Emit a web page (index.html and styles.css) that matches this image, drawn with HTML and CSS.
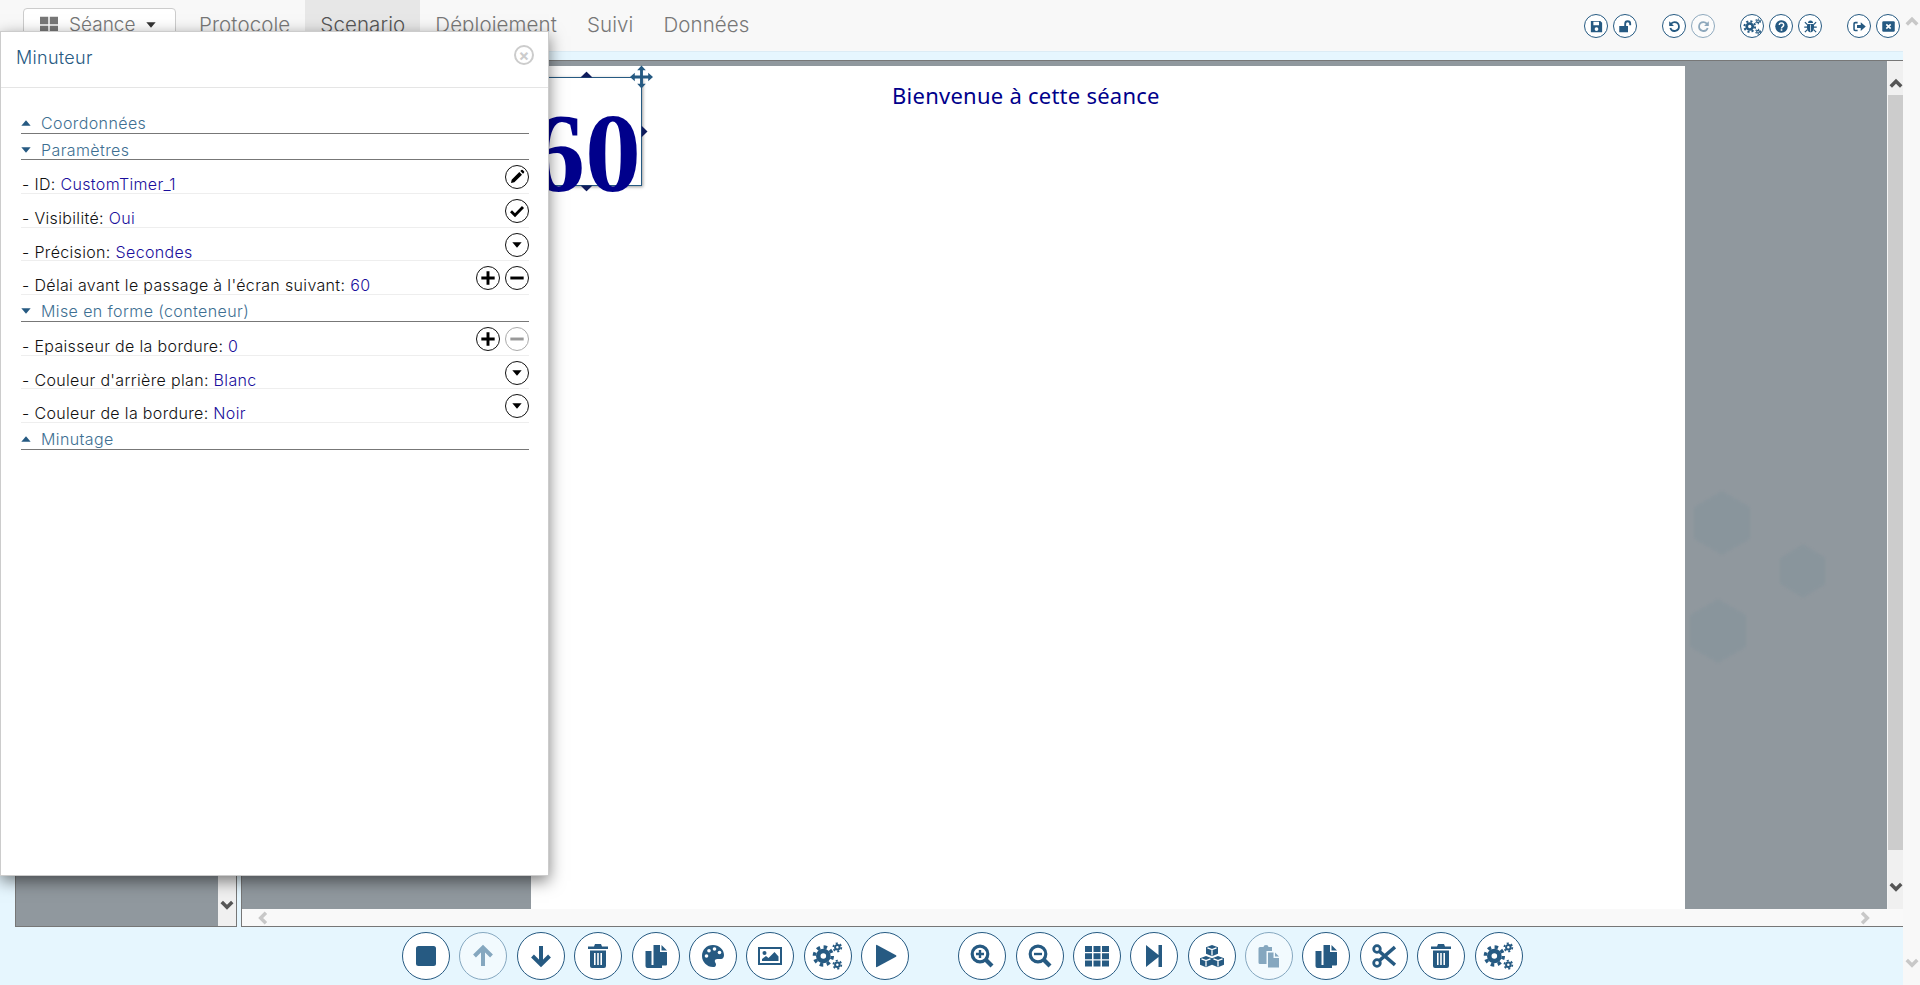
FILE: index.html
```html
<!DOCTYPE html>
<html lang="fr">
<head>
    <meta charset="UTF-8">
    <title>Minuteur</title>
    <link rel="stylesheet" href="styles.css">
</head>
<body>
    <svg class="sprite" xmlns="http://www.w3.org/2000/svg">
        <symbol id="i-save" viewBox="0 0 24 24"><path fill-rule="evenodd" d="M3 3h15l3 3v15H3zM7 4.500v5.500h9V4.500zM12 13a3 3 0 1 0 0 6 3 3 0 0 0 0-6z"/></symbol>
        <symbol id="i-unlock" viewBox="0 0 24 24"><path d="M2 11h14v10H2zM10 11V7.500a5.500 5.500 0 0 1 11 0V10h-3V7.500a2.500 2.500 0 0 0-5 0V11z"/></symbol>
        <symbol id="i-undo" viewBox="0 0 24 24"><path d="M12 3.500a8.500 8.500 0 1 1-8 11.300l2.600-.9A5.700 5.700 0 1 0 12 6.300a5.600 5.600 0 0 0-3.900 1.600L11 11H3.500V3.500l2.600 2.500A8.400 8.400 0 0 1 12 3.500z"/></symbol>
        <symbol id="i-redo" viewBox="0 0 24 24"><path transform="matrix(-1 0 0 1 24 0)" d="M12 3.500a8.500 8.500 0 1 1-8 11.300l2.600-.9A5.700 5.700 0 1 0 12 6.300a5.600 5.600 0 0 0-3.900 1.600L11 11H3.500V3.500l2.600 2.500A8.400 8.400 0 0 1 12 3.500z"/></symbol>
        <symbol id="i-cogs" viewBox="0 0 24 24">
            <g fill="none" stroke="currentColor">
                <circle cx="8.500" cy="12" r="3.800" stroke-width="3.400"/>
                <circle cx="8.500" cy="12" r="6.700" stroke-width="2.600" stroke-dasharray="2.630 2.630"/>
                <circle cx="19" cy="5.500" r="1.700" stroke-width="1.500"/>
                <circle cx="19" cy="5.500" r="3" stroke-width="1.300" stroke-dasharray="1.570 1.570"/>
                <circle cx="19" cy="18.500" r="1.700" stroke-width="1.500"/>
                <circle cx="19" cy="18.500" r="3" stroke-width="1.300" stroke-dasharray="1.570 1.570"/>
            </g>
        </symbol>
        <symbol id="i-help" viewBox="0 0 24 24">
            <circle cx="12" cy="12" r="10"/>
            <path d="M8.500 9.500a3.500 3.200 0 1 1 5.500 2.600c-1.300.9-2 1.400-2 2.900" fill="none" stroke="#fff" stroke-width="2.400"/>
            <rect x="10.700" y="16.300" width="2.600" height="2.600" fill="#fff"/>
        </symbol>
        <symbol id="i-bug" viewBox="0 0 24 24">
            <path d="M8 6.500a4 4 0 0 1 8 0z"/>
            <path d="M7 8h10c1 2 1 9-1 11-1 1.500-3 2-4 2s-3-.5-4-2C6 17 6 10 7 8z"/>
            <path d="M3 5l4 4M21 5l-4 4M2 13h5M22 13h-5M3 21l4-4M21 21l-4-4" stroke="currentColor" stroke-width="2" fill="none"/>
            <path d="M12 9v11" stroke="#fff" stroke-width="1.200"/>
        </symbol>
        <symbol id="i-exit" viewBox="0 0 24 24"><path d="M9 4.500v2.500H5.500q-1 0-1 1v8q0 1 1 1H9v2.500H5a3 3 0 0 1-3-3V7.500a3 3 0 0 1 3-3z"/><path d="M8 9.500h6V5l8 7-8 7v-4.500H8z"/></symbol>
        <symbol id="i-close-box" viewBox="0 0 24 24"><rect x="2" y="3.500" width="20" height="17" rx="2"/><path d="M8.500 8.500l7 7M15.500 8.500l-7 7" stroke="#fff" stroke-width="2.600"/></symbol>
        <symbol id="i-stop" viewBox="0 0 24 24"><rect x="2" y="2" width="20" height="20" rx="2.500"/></symbol>
        <symbol id="i-up" viewBox="0 0 24 24"><path d="M12 22V4M3.500 12L12 3.500 20.500 12" fill="none" stroke="currentColor" stroke-width="4"/></symbol>
        <symbol id="i-down" viewBox="0 0 24 24"><path d="M12 2v18M3.500 12l8.500 8.500 8.500-8.500" fill="none" stroke="currentColor" stroke-width="4"/></symbol>
        <symbol id="i-trash" viewBox="0 0 24 24"><path fill-rule="evenodd" d="M9 0h6l1 2.500h6V5H2V2.500h6zM4 6.500h16V22a2 2 0 0 1-2 2H6a2 2 0 0 1-2-2zM8 9v12h1.600V9zM11.200 9v12h1.600V9zM14.400 9v12H16V9z"/></symbol>
        <symbol id="i-copy" viewBox="0 0 24 24"><path d="M1.500 7H7.500v14h10.500v3H3.500a2 2 0 0 1-2-2z"/><path d="M9.500 1H16v7h7v12.500a1 1 0 0 1-1 1H9.500zM17.500 1l5.500 5.500h-5.500z"/></symbol>
        <symbol id="i-palette" viewBox="0 0 24 24">
            <path d="M12 1C5.500 1 1 5.800 1 12c0 6 5 11 11 11 2 0 3-1 3-2.600 0-1.800-1.200-2-1.200-3.500 0-1.300 1-2 2.400-2H20c2 0 3-1.500 3-3.900C23 5.500 18 1 12 1z"/>
            <circle cx="5.500" cy="12" r="1.800" fill="#fff"/><circle cx="8" cy="6.800" r="1.800" fill="#fff"/><circle cx="13.500" cy="5" r="1.800" fill="#fff"/><circle cx="18.500" cy="8.500" r="1.800" fill="#fff"/>
        </symbol>
        <symbol id="i-image" viewBox="0 0 24 24"><path fill-rule="evenodd" d="M0 3h24v18H0zM2 5v14h20V5z"/><circle cx="6.500" cy="9" r="2"/><path d="M4 17v-2l4-3 2.500 2 6-6 4 4.500V17z"/></symbol>
        <symbol id="i-play" viewBox="0 0 24 24"><path d="M3 1.500q0-1 1-.5l19 10.300q1 .7 0 1.400L4 23q-1 .5-1-.5z"/></symbol>
        <symbol id="i-zoom-in" viewBox="0 0 24 24"><circle cx="10" cy="10" r="7.800" fill="none" stroke="currentColor" stroke-width="3.200"/><path d="M15.500 15.500L22 22" stroke="currentColor" stroke-width="4.200"/><path d="M6 10h8M10 6v8" stroke="currentColor" stroke-width="2.400"/></symbol>
        <symbol id="i-zoom-out" viewBox="0 0 24 24"><circle cx="10" cy="10" r="7.800" fill="none" stroke="currentColor" stroke-width="3.200"/><path d="M15.500 15.500L22 22" stroke="currentColor" stroke-width="4.200"/><path d="M6 10h8" stroke="currentColor" stroke-width="2.400"/></symbol>
        <symbol id="i-grid" viewBox="0 0 24 24"><path d="M0 2h7v6H0zM8.500 2h7v6h-7zM17 2h7v6h-7zM0 9.200h7v6H0zM8.500 9.200h7v6h-7zM17 9.200h7v6h-7zM0 16.400h7v6H0zM8.500 16.400h7v6h-7zM17 16.400h7v6h-7z"/></symbol>
        <symbol id="i-step" viewBox="0 0 24 24"><path d="M4 1l12.500 10V1H20v22h-3.500V13L4 23z"/></symbol>
        <symbol id="i-cubes" viewBox="0 0 24 24">
            <path d="M12 1l6 2.300v6.500l-6 2.500-6-2.500V3.300z"/><path d="M6 12l6 2.300v6.500L6 23.300 0 20.800v-6.500z"/><path d="M18 12l6 2.300v6.500l-6 2.500-6-2.500v-6.500z"/>
            <path d="M7.500 3.800L12 5.500l4.500-1.700M12 5.500v6M1.500 14.800L6 16.500l4.500-1.700M6 16.500v6M13.500 14.800L18 16.500l4.500-1.700M18 16.500v6" fill="none" stroke="#fff" stroke-width="1.300"/>
        </symbol>
        <symbol id="i-paste" viewBox="0 0 24 24"><path d="M3 3h3.500a2.500 2 0 0 1 5 0H15v4H9.500v13H3a1.500 1.500 0 0 1-1.500-1.500v-14A1.500 1.500 0 0 1 3 3z"/><path d="M11 8.500h5.500v5.500H22v9.500H11zM18 8.500l4 4h-4z"/></symbol>
        <symbol id="i-cut" viewBox="0 0 24 24">
            <circle cx="5" cy="5" r="3.300" fill="none" stroke="currentColor" stroke-width="2.800"/><circle cx="5" cy="19" r="3.300" fill="none" stroke="currentColor" stroke-width="2.800"/>
            <path d="M7.500 7.500L23 21M7.500 16.500L23 3" stroke="currentColor" stroke-width="3.600"/>
        </symbol>
        <symbol id="i-pencil" viewBox="0 0 24 24"><path d="M15.500 4.500l4 4L8 20l-5 1 1-5zM17 3l1.500-1.500a1.500 1.500 0 0 1 2 0l2 2a1.500 1.500 0 0 1 0 2L21 7z"/></symbol>
        <symbol id="i-check" viewBox="0 0 24 24"><path d="M3 12.500l6 6L21 6" fill="none" stroke="currentColor" stroke-width="4.200"/></symbol>
        <symbol id="i-caret" viewBox="0 0 24 24"><path d="M5 8h14l-7 8z"/></symbol>
        <symbol id="i-caret-up" viewBox="0 0 24 24"><path d="M5 16h14l-7-8z"/></symbol>
        <symbol id="i-plus" viewBox="0 0 24 24"><path d="M2 12h20M12 2v20" stroke="currentColor" stroke-width="4.400"/></symbol>
        <symbol id="i-minus" viewBox="0 0 24 24"><path d="M2 12h20" stroke="currentColor" stroke-width="4.400"/></symbol>
        <symbol id="i-tiles" viewBox="0 0 24 24"><path d="M0 1h11v10H0zM13 1h11v10H13zM0 13h11v10H0zM13 13h11v10H13z"/></symbol>
        <symbol id="i-move" viewBox="0 0 24 24"><path d="M12 0l4.500 5H13.500v5.500H19V7.500l5 4.500-5 4.500v-3h-5.500V19h3L12 24l-4.500-5h3v-5.500H5v3L0 12l5-4.500v3h5.500V5h-3z"/></symbol>
        <symbol id="i-chev-up" viewBox="0 0 24 24"><path d="M3 18l9-9 9 9" fill="none" stroke="currentColor" stroke-width="6"/></symbol>
        <symbol id="i-chev-down" viewBox="0 0 24 24"><path d="M3 7l9 9 9-9" fill="none" stroke="currentColor" stroke-width="6"/></symbol>
        <symbol id="i-chev-left" viewBox="0 0 24 24"><path d="M17 3l-9 9 9 9" fill="none" stroke="currentColor" stroke-width="6"/></symbol>
        <symbol id="i-chev-right" viewBox="0 0 24 24"><path d="M7 3l9 9-9 9" fill="none" stroke="currentColor" stroke-width="6"/></symbol>
    </svg>

    <div class="page">
        <div class="app">
            <nav class="navbar">
                <button class="seance-btn">
                    <svg class="seance-icon"><use href="#i-tiles"/></svg>
                    <span>Séance</span>
                    <svg class="seance-caret"><use href="#i-caret"/></svg>
                </button>
                <a class="nav-link">Protocole</a>
                <a class="nav-link active">Scenario</a>
                <a class="nav-link">Déploiement</a>
                <a class="nav-link">Suivi</a>
                <a class="nav-link">Données</a>

                <div class="nav-tools">
                    <div class="nav-group">
                        <span class="round-btn small"><svg><use href="#i-save"/></svg></span>
                        <span class="round-btn small"><svg><use href="#i-unlock"/></svg></span>
                    </div>
                    <div class="nav-group">
                        <span class="round-btn small"><svg><use href="#i-undo"/></svg></span>
                        <span class="round-btn small disabled"><svg><use href="#i-redo"/></svg></span>
                    </div>
                    <div class="nav-group">
                        <span class="round-btn small"><svg class="wide"><use href="#i-cogs"/></svg></span>
                        <span class="round-btn small"><svg><use href="#i-help"/></svg></span>
                        <span class="round-btn small"><svg><use href="#i-bug"/></svg></span>
                    </div>
                    <div class="nav-group">
                        <span class="round-btn small"><svg><use href="#i-exit"/></svg></span>
                        <span class="round-btn small"><svg><use href="#i-close-box"/></svg></span>
                    </div>
                </div>
            </nav>

            <div class="workspace">
                <aside class="side-list">
                    <div class="side-fill"></div>
                    <div class="side-scroll"><svg class="chev dark"><use href="#i-chev-down"/></svg></div>
                </aside>

                <section class="stage">
                    <div class="stage-main">
                        <div class="viewport">
                            <div class="sheet">
                                <p class="sheet-title">Bienvenue à cette séance</p>
                                <div class="timer">
                                    <span class="timer-value">60</span>
                                    <i class="handle handle-top"></i>
                                    <i class="handle handle-right"></i>
                                    <i class="handle handle-bottom"></i>
                                    <svg class="move-icon"><use href="#i-move"/></svg>
                                </div>
                            </div>
                            <svg class="hexagons" viewBox="0 0 140 200">
                                <polygon points="37,13 65,29 65,61 37,77 9,61 9,29"/>
                                <polygon points="118,66 141,80 141,106 118,120 95,106 95,80"/>
                                <polygon points="33,121 61,137 61,169 33,185 5,169 5,137"/>
                            </svg>
                        </div>
                        <div class="v-scroll">
                            <div class="v-scroll-top"><svg class="chev dark"><use href="#i-chev-up"/></svg></div>
                            <div class="v-scroll-thumb"></div>
                            <div class="v-scroll-bottom"><svg class="chev dark"><use href="#i-chev-down"/></svg></div>
                        </div>
                    </div>
                    <div class="h-scroll">
                        <svg class="chev light"><use href="#i-chev-left"/></svg>
                        <svg class="chev light"><use href="#i-chev-right"/></svg>
                    </div>
                </section>
            </div>

            <footer class="toolbar">
                <div class="tool-group">
                    <span class="round-btn big"><svg><use href="#i-stop"/></svg></span>
                    <span class="round-btn big disabled"><svg><use href="#i-up"/></svg></span>
                    <span class="round-btn big"><svg><use href="#i-down"/></svg></span>
                    <span class="round-btn big"><svg><use href="#i-trash"/></svg></span>
                    <span class="round-btn big"><svg><use href="#i-copy"/></svg></span>
                    <span class="round-btn big"><svg><use href="#i-palette"/></svg></span>
                    <span class="round-btn big"><svg><use href="#i-image"/></svg></span>
                    <span class="round-btn big"><svg class="wide"><use href="#i-cogs"/></svg></span>
                    <span class="round-btn big"><svg><use href="#i-play"/></svg></span>
                </div>
                <div class="tool-group">
                    <span class="round-btn big"><svg><use href="#i-zoom-in"/></svg></span>
                    <span class="round-btn big"><svg><use href="#i-zoom-out"/></svg></span>
                    <span class="round-btn big"><svg><use href="#i-grid"/></svg></span>
                    <span class="round-btn big"><svg><use href="#i-step"/></svg></span>
                    <span class="round-btn big"><svg><use href="#i-cubes"/></svg></span>
                    <span class="round-btn big disabled"><svg><use href="#i-paste"/></svg></span>
                    <span class="round-btn big"><svg><use href="#i-copy"/></svg></span>
                    <span class="round-btn big"><svg><use href="#i-cut"/></svg></span>
                    <span class="round-btn big"><svg><use href="#i-trash"/></svg></span>
                    <span class="round-btn big"><svg class="wide"><use href="#i-cogs"/></svg></span>
                </div>
            </footer>
        </div>

        <div class="page-scroll">
            <svg class="chev light"><use href="#i-chev-up"/></svg>
            <svg class="chev light"><use href="#i-chev-down"/></svg>
        </div>
    </div>

    <div class="dialog">
        <header class="dialog-head">
            <span class="dialog-title">Minuteur</span>
            <span class="dialog-close">&times;</span>
        </header>
        <div class="dialog-body">
            <div class="section-head"><svg class="section-caret"><use href="#i-caret-up"/></svg>Coordonnées</div>

            <div class="section-head"><svg class="section-caret"><use href="#i-caret"/></svg>Paramètres</div>
            <div class="prop-row">
                <span class="prop-text">- ID: <b>CustomTimer_1</b></span>
                <span class="prop-actions"><span class="round-btn row"><svg><use href="#i-pencil"/></svg></span></span>
            </div>
            <div class="prop-row">
                <span class="prop-text">- Visibilité: <b>Oui</b></span>
                <span class="prop-actions"><span class="round-btn row"><svg><use href="#i-check"/></svg></span></span>
            </div>
            <div class="prop-row">
                <span class="prop-text">- Précision: <b>Secondes</b></span>
                <span class="prop-actions"><span class="round-btn row"><svg><use href="#i-caret"/></svg></span></span>
            </div>
            <div class="prop-row">
                <span class="prop-text">- Délai avant le passage à l'écran suivant: <b>60</b></span>
                <span class="prop-actions">
                    <span class="round-btn row"><svg><use href="#i-plus"/></svg></span>
                    <span class="round-btn row"><svg><use href="#i-minus"/></svg></span>
                </span>
            </div>

            <div class="section-head"><svg class="section-caret"><use href="#i-caret"/></svg>Mise en forme (conteneur)</div>
            <div class="prop-row">
                <span class="prop-text">- Epaisseur de la bordure: <b>0</b></span>
                <span class="prop-actions">
                    <span class="round-btn row"><svg><use href="#i-plus"/></svg></span>
                    <span class="round-btn row off"><svg><use href="#i-minus"/></svg></span>
                </span>
            </div>
            <div class="prop-row">
                <span class="prop-text">- Couleur d'arrière plan: <b>Blanc</b></span>
                <span class="prop-actions"><span class="round-btn row"><svg><use href="#i-caret"/></svg></span></span>
            </div>
            <div class="prop-row">
                <span class="prop-text">- Couleur de la bordure: <b>Noir</b></span>
                <span class="prop-actions"><span class="round-btn row"><svg><use href="#i-caret"/></svg></span></span>
            </div>

            <div class="section-head"><svg class="section-caret"><use href="#i-caret-up"/></svg>Minutage</div>
        </div>
    </div>
</body>
</html>
```

FILE: styles.css
```css
* {
    box-sizing: border-box;
}

body {
    margin: 0;
    height: 100vh;
    overflow: hidden;
    font-family: Inter, "Open Sans", sans-serif;
    font-weight: 300;
    background-color: #e6f6fe;
    color: #222;
}

svg {
    fill: currentColor;
}

.sprite {
    display: none;
}

.page {
    display: flex;
    height: 100%;
}

.app {
    flex: 1;
    display: flex;
    flex-direction: column;
    min-width: 0;
}

.page-scroll {
    width: 17px;
    display: flex;
    flex-direction: column;
    justify-content: space-between;
    align-items: center;
    padding: 14px 0 15px;
    background-color: #f8f8f8;
}

.chev {
    display: block;
    width: 14px;
    height: 14px;
}

.chev.dark {
    color: #555;
}

.chev.light {
    color: #c8c8c8;
}

/* top bar */
.navbar {
    display: flex;
    align-items: flex-start;
    height: 52px;
    padding: 0 3px 0 23px;
    background-color: #f8f8f8;
    border-bottom: 1px solid #dcecf5;
}

.seance-btn {
    display: flex;
    align-items: center;
    width: 153px;
    height: 38px;
    margin: 8px 8px 0 0;
    padding: 0 0 5px 16px;
    font: inherit;
    font-size: 19px;
    color: #777;
    background-color: #fff;
    border: 1px solid #ccc;
    border-radius: 4px;
}

.seance-icon {
    width: 18px;
    height: 18px;
    margin-right: 11px;
    color: #777;
}

.seance-caret {
    width: 16px;
    height: 16px;
    margin-left: 8px;
    color: #333;
}

.nav-link {
    display: flex;
    align-items: center;
    height: 51px;
    padding: 0 15px 2px;
    font-size: 20.5px;
    letter-spacing: 0.1px;
    color: #777;
}

.nav-link.active {
    background-color: #e7e7e7;
    color: #555;
}

.nav-tools {
    display: flex;
    gap: 25px;
    margin: 14px 0 0 auto;
}

.nav-group {
    display: flex;
    gap: 5px;
}

/* round buttons */
.round-btn {
    display: flex;
    align-items: center;
    justify-content: center;
    flex-shrink: 0;
    border: 1px solid #265a82;
    border-radius: 50%;
    background-color: #fff;
    color: #265a82;
}

.round-btn.small {
    width: 24px;
    height: 24px;
}

.round-btn.small svg {
    width: 15px;
    height: 15px;
}

.round-btn.small svg.wide {
    width: 19px;
    height: 19px;
}

.round-btn.big {
    width: 48px;
    height: 48px;
}

.round-btn.big svg {
    width: 24px;
    height: 24px;
}

.round-btn.big svg.wide {
    width: 32px;
    height: 32px;
}

.round-btn.row {
    width: 24px;
    height: 24px;
    border: 1.5px solid #111;
    color: #000;
}

.round-btn.row svg {
    width: 16px;
    height: 16px;
}

.round-btn.off {
    border-color: #aaa;
    color: #999;
}

.round-btn.disabled {
    opacity: 0.5;
}

/* main area */
.workspace {
    flex: 1;
    display: flex;
    gap: 4px;
    min-height: 0;
    padding: 8px 0 0 15px;
}

.side-list {
    display: flex;
    width: 222px;
    border: 1px solid #777;
}

.side-fill {
    flex: 1;
    background-color: #90989e;
}

.side-scroll {
    display: flex;
    flex-direction: column;
    justify-content: flex-end;
    align-items: center;
    width: 18px;
    padding-bottom: 14px;
    background-color: #f0f0f0;
}

.stage {
    flex: 1;
    display: flex;
    flex-direction: column;
    min-width: 0;
    border-left: 1px solid #777;
    border-top: 1px solid #777;
    border-bottom: 1px solid #777;
}

.stage-main {
    flex: 1;
    display: flex;
    min-height: 0;
}

.viewport {
    flex: 1;
    position: relative;
    padding: 5px 0 0 289px;
    background-color: #90989e;
}

.sheet {
    position: relative;
    width: 1154px;
    height: 100%;
    background-color: #fff;
}

.sheet-title {
    position: absolute;
    left: 361px;
    top: 13px;
    margin: 0;
    font-family: "Noto Sans", sans-serif;
    font-size: 22px;
    font-weight: 400;
    line-height: 32px;
    letter-spacing: 0.25px;
    white-space: nowrap;
    color: #00008b;
}

.timer {
    position: absolute;
    left: 0;
    top: 11px;
    width: 111px;
    height: 109px;
    border: 1px solid #265a82;
    box-shadow: 1px 1px 3px rgba(0, 0, 0, 0.4);
}

.timer-value {
    position: absolute;
    right: 0;
    top: 19px;
    font-family: "Liberation Serif", serif;
    font-size: 112px;
    font-weight: 700;
    line-height: 112px;
    color: #00008b;
}

.handle {
    position: absolute;
    width: 9px;
    height: 9px;
    background-color: #101c5c;
    transform: rotate(45deg);
}

.handle-top {
    left: 50px;
    top: -5px;
    clip-path: polygon(0 0, 100% 0, 0 100%);
}

.handle-right {
    right: -5px;
    top: 49px;
    clip-path: polygon(0 0, 100% 0, 100% 100%);
}

.handle-bottom {
    left: 50px;
    bottom: -5px;
    clip-path: polygon(100% 0, 100% 100%, 0 100%);
}

.move-icon {
    position: absolute;
    right: -12px;
    top: -13px;
    width: 23px;
    height: 24px;
    color: #265a82;
}

.hexagons {
    position: absolute;
    left: 1443px;
    top: 417px;
    width: 140px;
    height: 200px;
    fill: #84939b;
    opacity: 0.5;
    filter: blur(1px);
}

.v-scroll {
    display: flex;
    flex-direction: column;
    width: 16px;
    background-color: #f0f0f0;
    border-left: 1px solid #f5f5f5;
}

.v-scroll-top {
    height: 34px;
    padding-top: 15px;
    display: flex;
    justify-content: center;
}

.v-scroll-thumb {
    flex: 1;
    background-color: #ccc;
}

.v-scroll-bottom {
    height: 59px;
    display: flex;
    justify-content: center;
    align-items: flex-end;
    padding-bottom: 15px;
}

.h-scroll {
    display: flex;
    justify-content: space-between;
    align-items: center;
    height: 17px;
    padding: 0 31px 0 14px;
    background-color: #f9f9f9;
}

/* bottom toolbar */
.toolbar {
    display: flex;
    gap: 49px;
    height: 58px;
    padding: 5px 0 0 402px;
}

.tool-group {
    display: flex;
    gap: 9.4px;
}

/* properties dialog */
.dialog {
    position: absolute;
    left: 0;
    top: 31px;
    width: 549px;
    height: 845px;
    background-color: #fff;
    border: 1px solid rgba(0, 0, 0, 0.2);
    box-shadow: 0 5px 15px rgba(0, 0, 0, 0.5);
}

.dialog-head {
    display: flex;
    justify-content: space-between;
    height: 56px;
    padding: 13px 14px 0 15px;
    border-bottom: 1px solid #e5e5e5;
}

.dialog-title {
    margin-top: 2px;
    font-size: 18px;
    line-height: 22px;
    letter-spacing: 0.3px;
    color: #265a82;
}

.dialog-close {
    display: flex;
    align-items: center;
    justify-content: center;
    width: 20px;
    height: 20px;
    font-size: 16px;
    font-weight: 700;
    color: #ccc;
    border: 2px solid #ccc;
    border-radius: 50%;
}

.dialog-body {
    padding: 19px 19px 0 20px;
}

.section-head {
    display: flex;
    align-items: center;
    height: 26.7px;
    padding-top: 6px;
    font-size: 16px;
    line-height: 18px;
    letter-spacing: 0.4px;
    color: #3e6f92;
    border-bottom: 1px solid #777;
}

.section-caret {
    width: 16px;
    height: 16px;
    margin: 0 7px 0 -3px;
    color: #265a82;
}

.prop-row {
    display: flex;
    justify-content: space-between;
    height: 33.7px;
    border-bottom: 1px solid #eee;
}

.prop-text {
    padding: 14px 0 0 1px;
    font-size: 16px;
    line-height: 20px;
    letter-spacing: 0.34px;
    white-space: nowrap;
    color: #111;
}

.prop-text b {
    font-weight: 300;
    color: #1a0f9c;
}

.prop-actions {
    display: flex;
    gap: 5px;
    padding-top: 5px;
}
```
